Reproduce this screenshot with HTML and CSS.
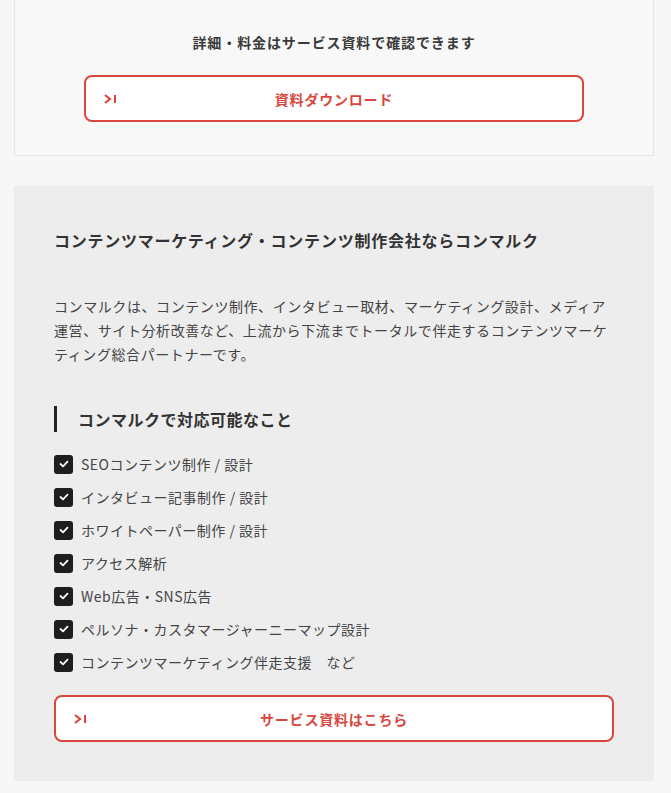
FILE: index.html
```html
<!DOCTYPE html>
<html lang="ja">
<head>
<meta charset="utf-8">
<link rel="stylesheet" href="styles.css">
</head>
<body>
<div class="page">
  <section class="dl-box">
    <p class="dl-lead">詳細・料金はサービス資料で確認できます</p>
    <a class="btn" href="#">
      <svg class="btn-icon" width="13" height="10" viewBox="0 0 13 10"><path d="M1 1 L6 5 L1 9" fill="none" stroke="#d9463e" stroke-width="2.1" stroke-linejoin="miter"/><rect x="10" y="1" width="2" height="8" fill="#d9463e"/></svg>
      <span class="btn-label">資料ダウンロード</span>
    </a>
  </section>

  <section class="info-box">
    <h2 class="info-title">コンテンツマーケティング・コンテンツ制作会社ならコンマルク</h2>
    <p class="info-text">コンマルクは、コンテンツ制作、インタビュー取材、マーケティング設計、メディア運営、サイト分析改善など、上流から下流までトータルで伴走するコンテンツマーケティング総合パートナーです。</p>
    <h3 class="sub-title">コンマルクで対応可能なこと</h3>
    <ul class="check-list">
      <li><span class="check"><svg width="10" height="8" viewBox="0 0 10 8"><path d="M1.5 4 L4 6.3 L8.5 1.7" fill="none" stroke="#fff" stroke-width="1.8" stroke-linecap="round" stroke-linejoin="round"/></svg></span>SEOコンテンツ制作 / 設計</li>
      <li><span class="check"><svg width="10" height="8" viewBox="0 0 10 8"><path d="M1.5 4 L4 6.3 L8.5 1.7" fill="none" stroke="#fff" stroke-width="1.8" stroke-linecap="round" stroke-linejoin="round"/></svg></span>インタビュー記事制作 / 設計</li>
      <li><span class="check"><svg width="10" height="8" viewBox="0 0 10 8"><path d="M1.5 4 L4 6.3 L8.5 1.7" fill="none" stroke="#fff" stroke-width="1.8" stroke-linecap="round" stroke-linejoin="round"/></svg></span>ホワイトペーパー制作 / 設計</li>
      <li><span class="check"><svg width="10" height="8" viewBox="0 0 10 8"><path d="M1.5 4 L4 6.3 L8.5 1.7" fill="none" stroke="#fff" stroke-width="1.8" stroke-linecap="round" stroke-linejoin="round"/></svg></span>アクセス解析</li>
      <li><span class="check"><svg width="10" height="8" viewBox="0 0 10 8"><path d="M1.5 4 L4 6.3 L8.5 1.7" fill="none" stroke="#fff" stroke-width="1.8" stroke-linecap="round" stroke-linejoin="round"/></svg></span>Web広告・SNS広告</li>
      <li><span class="check"><svg width="10" height="8" viewBox="0 0 10 8"><path d="M1.5 4 L4 6.3 L8.5 1.7" fill="none" stroke="#fff" stroke-width="1.8" stroke-linecap="round" stroke-linejoin="round"/></svg></span>ペルソナ・カスタマージャーニーマップ設計</li>
      <li><span class="check"><svg width="10" height="8" viewBox="0 0 10 8"><path d="M1.5 4 L4 6.3 L8.5 1.7" fill="none" stroke="#fff" stroke-width="1.8" stroke-linecap="round" stroke-linejoin="round"/></svg></span>コンテンツマーケティング伴走支援　など</li>
    </ul>
    <a class="btn btn-wide" href="#">
      <svg class="btn-icon" width="13" height="10" viewBox="0 0 13 10"><path d="M1 1 L6 5 L1 9" fill="none" stroke="#d9463e" stroke-width="2.1" stroke-linejoin="miter"/><rect x="10" y="1" width="2" height="8" fill="#d9463e"/></svg>
      <span class="btn-label">サービス資料はこちら</span>
    </a>
  </section>
</div>
</body>
</html>
```

FILE: styles.css
```css
* { box-sizing: border-box; }
html, body { margin: 0; padding: 0; }
body {
  background: #f7f7f7;
  font-family: "Noto Sans CJK JP", "Noto Sans", sans-serif;
  color: #444;
}
.page {
  width: 640px;
  margin: 0 0 0 14px;
  display: flex;
  flex-direction: column;
  gap: 30px;
}
.dl-box {
  background: #f8f8f8;
  border: 1px solid #e6e6e6;
  border-top: none;
  padding: 30px 70px 33px;
  display: flex;
  flex-direction: column;
  align-items: center;
}
.dl-lead {
  margin: 0 0 21px;
  font-size: 14px;
  line-height: 24px;
  font-weight: 700;
  letter-spacing: 0.9px;
  color: #3a3a3a;
  text-align: center;
}
.btn {
  display: flex;
  align-items: center;
  width: 500px;
  height: 47px;
  border: 2px solid #d9463e;
  border-radius: 8px;
  background: #fff;
  text-decoration: none;
  position: relative;
}
.btn-wide { width: 560px; height: 47px; }
.btn-icon {
  position: absolute;
  left: 18px;
  top: 50%;
  margin-top: -5px;
}
.btn-label {
  flex: 1;
  text-align: center;
  color: #d9463e;
  font-size: 14px;
  font-weight: 700;
  letter-spacing: 0.8px;
}
.info-box {
  background: #ededed;
  padding: 42px 40px 39px;
}
.info-title {
  margin: 0;
  font-size: 16px;
  line-height: 24px;
  font-weight: 700;
  letter-spacing: 0.76px;
  color: #333;
}
.info-text {
  margin: 42px 0 0;
  font-size: 14px;
  line-height: 24px;
  letter-spacing: 0.58px;
  color: #444;
}
.sub-title {
  margin: 40px 0 0;
  border-left: 3px solid #222;
  padding-left: 21px;
  font-size: 16px;
  line-height: 26px;
  font-weight: 700;
  letter-spacing: 0.5px;
  color: #333;
}
.check-list {
  list-style: none;
  margin: 20px 0 0;
  padding: 0;
  display: flex;
  flex-direction: column;
  gap: 9px;
}
.check-list li {
  display: flex;
  align-items: center;
  gap: 8px;
  font-size: 14px;
  line-height: 24px;
  letter-spacing: 0.5px;
  color: #444;
}
.check {
  width: 19px;
  height: 19px;
  border-radius: 3px;
  background: #1e1e1e;
  display: flex;
  align-items: center;
  justify-content: center;
  flex: none;
}
.info-box .btn { margin-top: 21px; }
```
